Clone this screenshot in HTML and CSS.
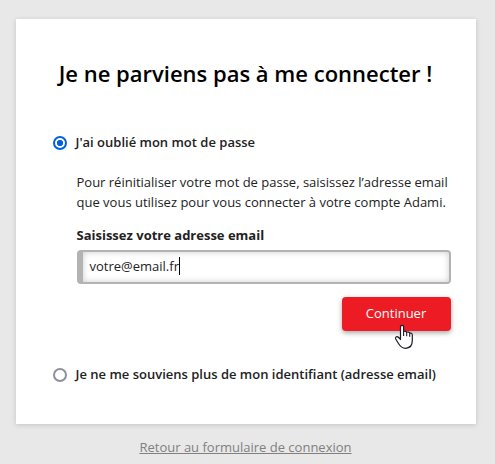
FILE: index.html
```html
<!DOCTYPE html>
<html lang="fr">
<head>
<meta charset="utf-8">
<title>Je ne parviens pas à me connecter</title>
<link rel="stylesheet" href="styles.css">
</head>
<body>
<main class="card">
  <h1 class="title">Je ne parviens pas à me connecter !</h1>
  <div class="option"><span class="radio checked"></span><span class="label">J'ai oublié mon mot de passe</span></div>
  <section class="details">
    <p class="help">Pour réinitialiser votre mot de passe, saisissez l’adresse email<br>que vous utilisez pour vous connecter à votre compte Adami.</p>
    <div class="field-label">Saisissez votre adresse email</div>
    <div class="field"><span class="value">votre@email.fr</span><i class="caret"></i></div>
    <div class="actions"><button class="submit">Continuer</button></div>
  </section>
  <div class="option"><span class="radio"></span><span class="label">Je ne me souviens plus de mon identifiant (adresse email)</span></div>
</main>
<a class="back">Retour au formulaire de connexion</a>
<svg class="cursor" width="20" height="26" viewBox="0 0 20 26"><path d="M6.500 15V3C6.500.9 9.600.9 9.600 3V7.600C10.600 7 12.500 7.200 12.700 8.300 13.700 7.700 15.500 8 15.700 9.200 16.800 8.800 18.300 9.300 18.300 11V16.500C18.300 21.500 15.500 24.300 11.500 24.300 7.500 24.300 6 22 4.500 19.500L1.700 15C1 13.500 2.300 12.200 3.800 12.900 5 13.500 5.600 14.300 6.500 15.500z" fill="#fff" stroke="#1a1a2a" stroke-width="1.200" stroke-linejoin="round"/><path d="M9.600 7.500v4.500M12.700 8.300v4M15.700 9.200v3.600" stroke="#1a1a2a" stroke-width="1.100" fill="none"/></svg>
</body>
</html>
```
FILE: styles.css
```css
* { box-sizing: border-box; }
body { margin: 0; height: 464px; overflow: hidden; background: #e8e8e8; font: 13px/20px "Open Sans", sans-serif; color: #222; padding-top: 19px; }
.card { width: 460px; height: 405px; margin-left: 16px; background: #fff; box-shadow: 0 1px 5px rgba(0,0,0,.16); padding: 39px 25px 0 37px; }
.title { margin: 0 13px 48px 0; font-size: 22px; line-height: 30px; font-weight: 600; color: #000; text-align: center; white-space: nowrap; }
.option { display: flex; align-items: center; height: 14px; gap: 8.5px; font-weight: 600; white-space: nowrap; }
.label { padding-bottom: 2px; }
.radio { width: 14px; height: 14px; border: 2px solid #8f8f9d; border-radius: 50%; }
.checked { border-color: #0060df; background: radial-gradient(circle, #0060df 2.8px, #fff 3.4px); }
.details { padding-left: 23.5px; height: 218px; padding-top: 22px; white-space: nowrap; }
.help { margin: 0 0 13px; }
.field-label { font-weight: 700; margin-bottom: 5px; }
.field { height: 34px; width: 374px; margin-left: .5px; display: flex; align-items: center; padding-left: 6.5px; border: 2px solid #b3b3b3; border-left-width: 6px; border-radius: 4px; background: #fff; box-shadow: inset 0 0 6px #ccc; }
.value { padding-bottom: 2px; }
.caret { width: 1px; height: 18px; margin-bottom: 2px; background: #000; }
.actions { display: flex; justify-content: flex-end; width: 374px; margin: 13px 0 0 .5px; }
.submit { width: 109px; height: 34px; padding: 0 1px 2px 0; border: 0; border-radius: 4px; background: #ed1c24; color: #fff; font: 13px "Open Sans", sans-serif; box-shadow: 0 2px 5px rgba(0,0,0,.35); }
.back { display: block; text-align: center; margin-top: 13px; padding-right: 4px; color: #808080; text-decoration: underline; }
.cursor { position: absolute; left: 394px; top: 324px; }
```
